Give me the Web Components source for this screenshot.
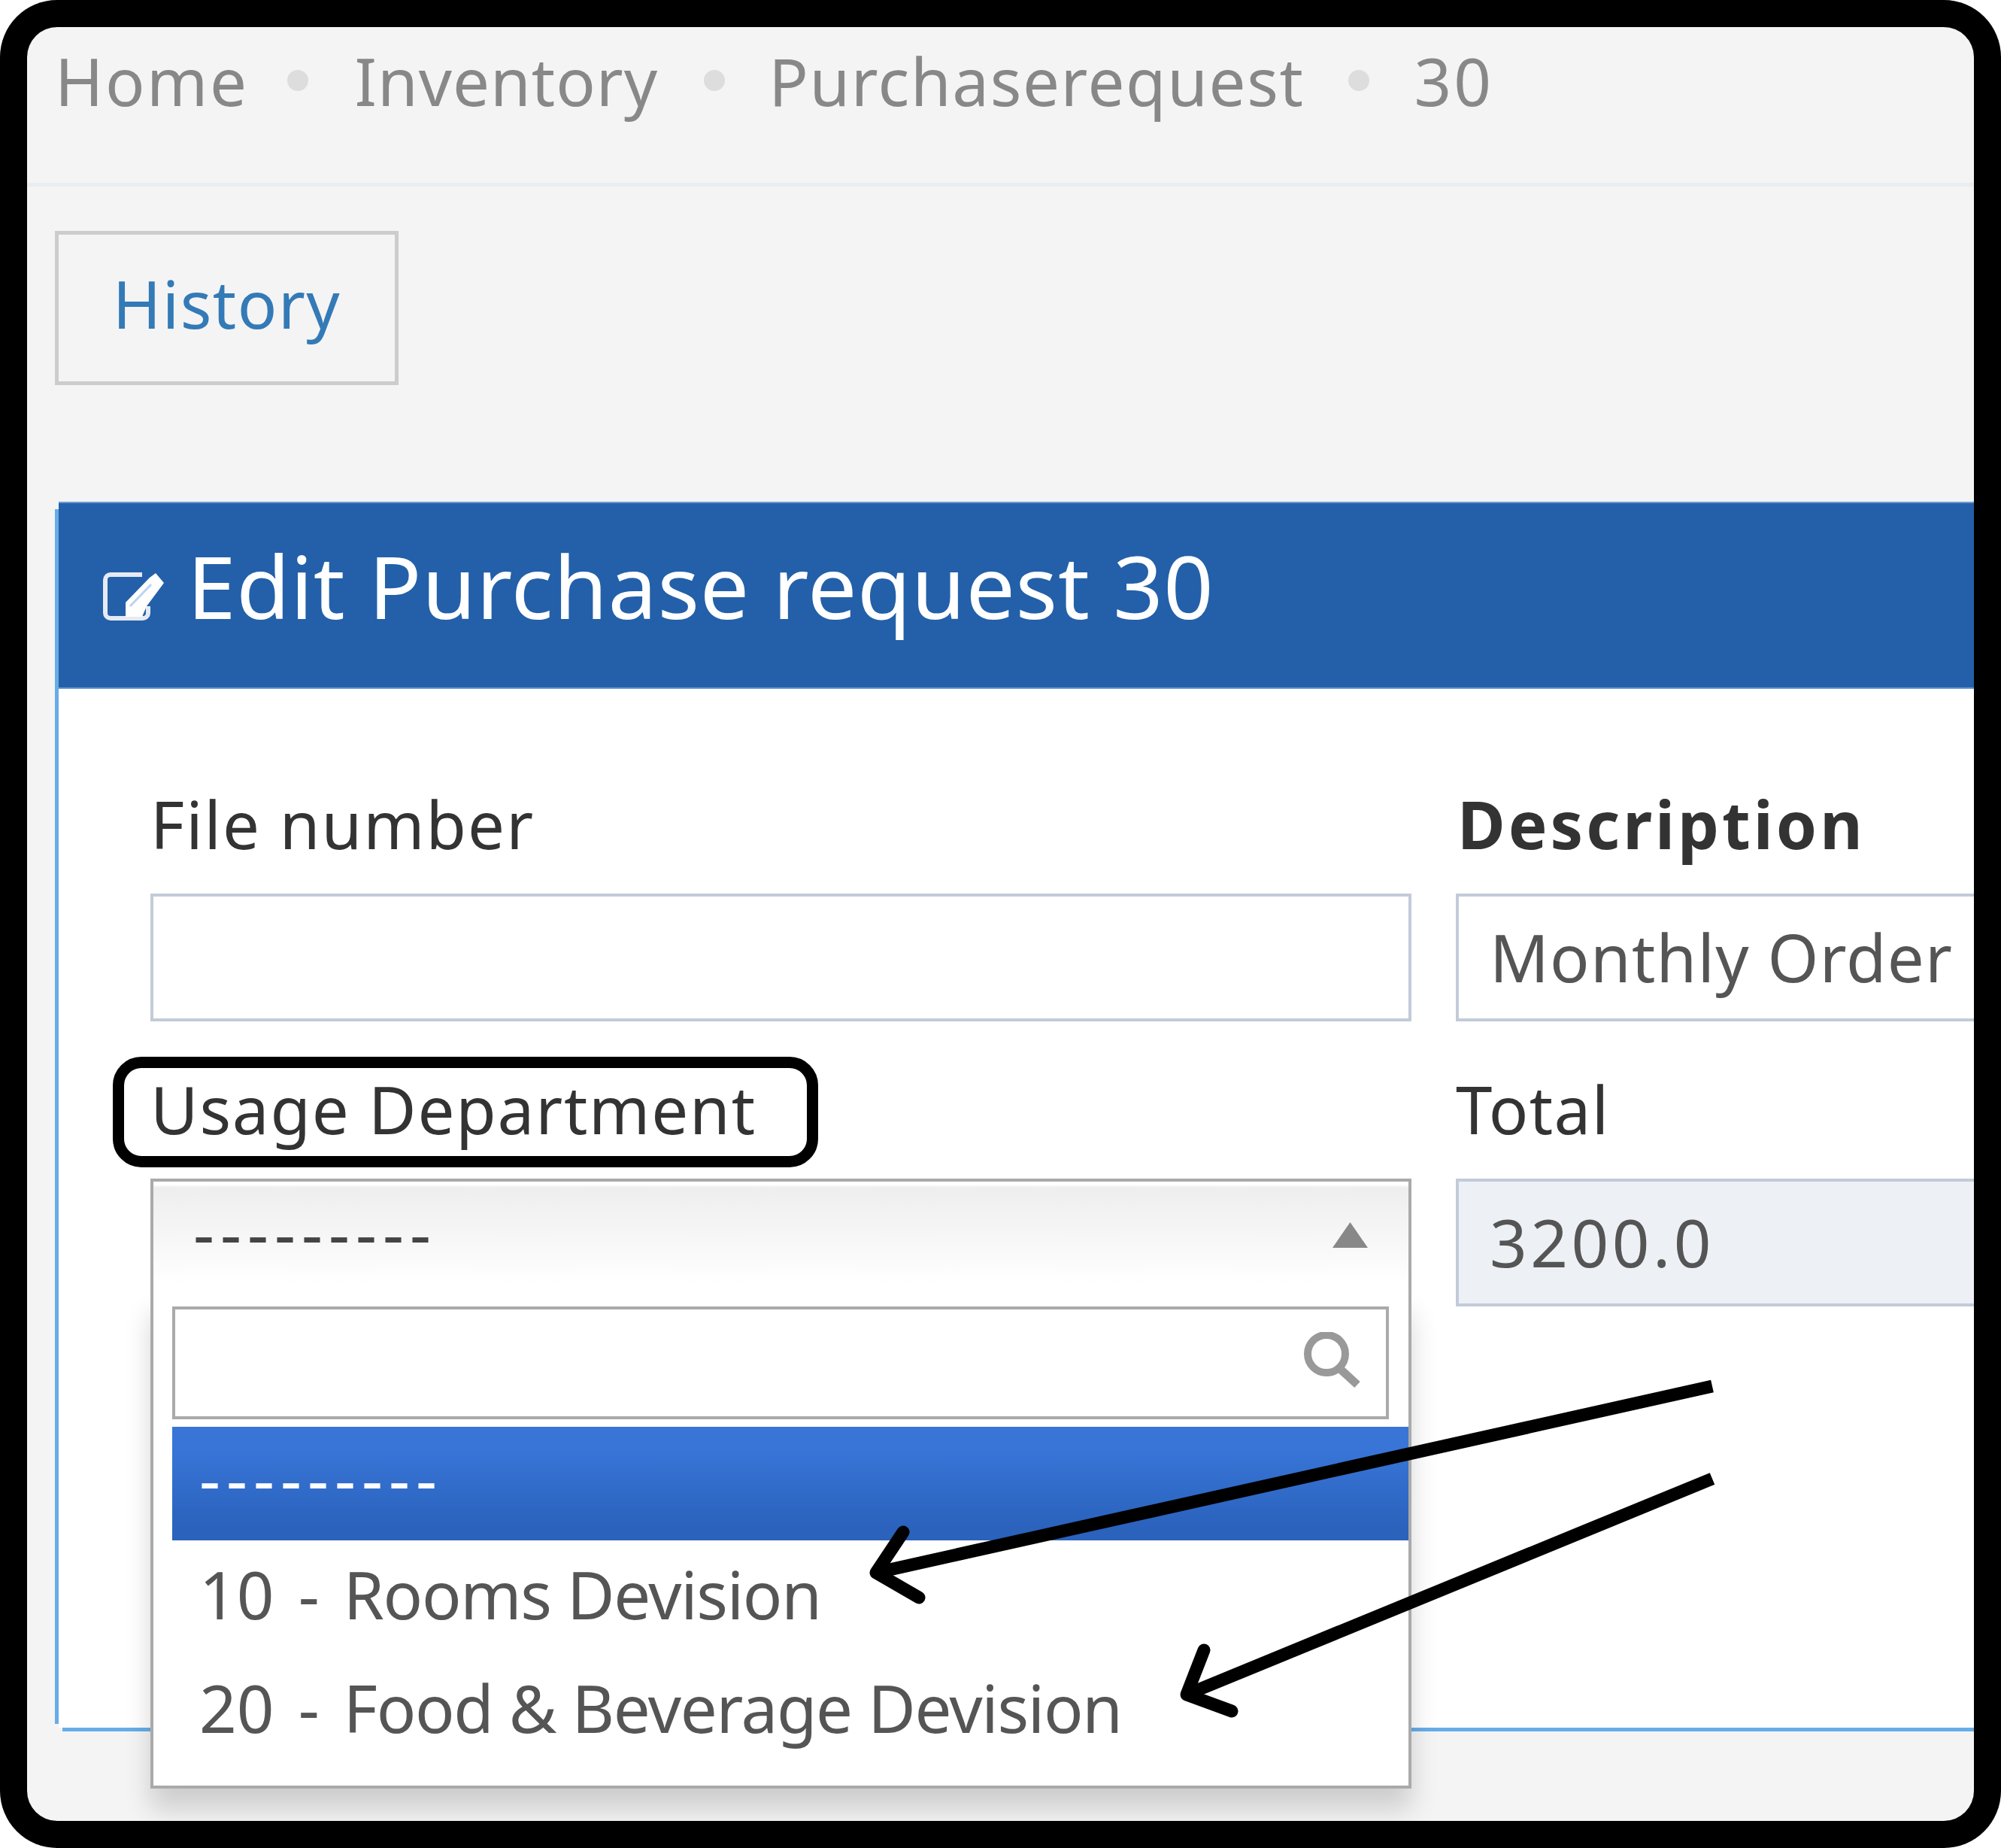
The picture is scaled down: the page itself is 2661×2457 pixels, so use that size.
<!DOCTYPE html>
<html>
<head>
<meta charset="utf-8">
<title>Edit Purchase request 30</title>
<style>
  html, body { margin: 0; padding: 0; background: #fff; }
  body { font-family: "Noto Sans", "Open Sans", sans-serif; }
</style>
</head>
<body>
<app-frame>
  <bread-crumbs>
    <crumb-item style="--track:2.5px;--ml:51px;--mr:62px">Home</crumb-item>
    <crumb-item style="--track:1px;--ml:61px;--mr:58px">Inventory</crumb-item>
    <crumb-item style="--track:1.6px;--ml:58px;--mr:60px">Purchaserequest</crumb-item>
    <crumb-item style="--track:3px" last>30</crumb-item>
  </bread-crumbs>
  <history-button>History</history-button>
  <edit-panel>
    <span slot="title">Edit Purchase request 30</span>
    <form-field style="--track:2px">File number<text-box slot="control"></text-box></form-field>
    <form-field style="--track:4px" bold>Description<text-box slot="control" style="--track:1.2px">Monthly Order</text-box></form-field>
    <form-field style="--track:1.8px" ringed>Usage Department<chosen-select slot="control"></chosen-select></form-field>
    <form-field style="--track:1.4px">Total<text-box slot="control" style="--track:4.5px" readonly>3200.0</text-box></form-field>
  </edit-panel>
  <note-arrows></note-arrows>
</app-frame>

<script>
// small helper, every component just sets its shadow html once
function mount(el, html) {
  el.attachShadow({ mode: 'open' }).innerHTML = html;
}

class AppFrame extends HTMLElement {
  constructor() {
    super();
    mount(this, `
      <style>
        :host { display: block; width: 2661px; height: 2457px; box-sizing: border-box; padding: 36px; background: #000; border-radius: 76px; position: relative; }
        .page { height: 100%; background: #f4f4f4; border-radius: 40px; overflow: hidden; }
      </style>
      <div class="page"><slot></slot></div>
    `);
  }
}

class BreadCrumbs extends HTMLElement {
  constructor() {
    super();
    mount(this, `
      <style>
        :host { display: flex; align-items: flex-start; height: 207px; box-sizing: content-box; padding-left: 37px; border-bottom: 5px solid #e9edf1; color: #888; font-size: 87px; line-height: 142px; }
      </style>
      <slot></slot>
    `);
  }
}

class CrumbItem extends HTMLElement {
  constructor() {
    super();
    mount(this, `
      <style>
        :host { display: flex; align-items: center; }
        span { letter-spacing: var(--track, 0); }
        i { width: 28px; height: 28px; margin: 0 var(--mr, 55px) 0 var(--ml, 54px); border-radius: 50%; background: #ddd; }
        :host([last]) i { display: none; }
      </style>
      <span><slot></slot></span><i></i>
    `);
  }
}

class HistoryButton extends HTMLElement {
  constructor() {
    super();
    mount(this, `
      <style>
        :host { display: flex; align-items: center; justify-content: center; box-sizing: border-box; width: 457px; height: 205px; padding-bottom: 14px; margin: 59px 0 0 37px; border: 5px solid #ccc; color: #337ab7; font-size: 87px; letter-spacing: 1.5px; }
      </style>
      <slot></slot>
    `);
  }
}

class EditPanel extends HTMLElement {
  constructor() {
    super();
    mount(this, `
      <style>
        :host {
          display: block; margin: 155px 0 0 37px; padding: 0 0 5px 5px;
          background:
            linear-gradient(#66ade8, #66ade8) 0 10px / 5px 1615px no-repeat,
            linear-gradient(#66ade8, #66ade8) 10px 100% / 100% 5px no-repeat;
        }
        header { display: flex; align-items: center; box-sizing: border-box; height: 249px; padding-left: 59px; background: #2360a9; border-top: 2px solid #6f9bd0; border-bottom: 2px solid #6f9bd0; color: #fff; font-size: 116px; letter-spacing: .7px; }
        header svg { flex: none; margin: 2px 30px 0 0; }
        header span { display: block; margin-top: -28px; }
        .body { box-sizing: border-box; height: 1381px; padding: 129px 0 0 122px; background: #fff; }
        .grid { display: grid; grid-template-columns: 1677px 1677px; column-gap: 59px; row-gap: 66px; align-items: start; }
      </style>
      <header>
        <svg width="82" height="66" viewBox="0 0 82 66">
          <path d="M52 4H10a7 7 0 0 0-7 7v44a7 7 0 0 0 7 7h43a7 7 0 0 0 7-7V46" fill="none" stroke="#e6eaf3" stroke-width="6"/>
          <path d="M30 41 62 8l8-6 11 13-23 31-6 14H30z" fill="#fff"/>
          <path d="M36 46 64 17" stroke="#bcd3f0" stroke-width="3"/>
        </svg>
        <span><slot name="title"></slot></span>
      </header>
      <div class="body"><div class="grid"><slot></slot></div></div>
    `);
  }
}

class FormField extends HTMLElement {
  constructor() {
    super();
    mount(this, `
      <style>
        :host { display: block; color: #333; font-size: 87px; }
        label { display: block; position: relative; height: 100px; line-height: 100px; margin-bottom: 43px; letter-spacing: var(--track, 0); }
        :host([bold]) label { font-weight: 700; padding-left: 2px; }
        .ring { display: none; position: absolute; left: -50px; top: -19px; box-sizing: border-box; width: 938px; height: 147px; border: 15px solid #000; border-radius: 38px; }
        :host([ringed]) .ring { display: block; }
      </style>
      <label><slot></slot><span class="ring"></span></label>
      <slot name="control"></slot>
    `);
  }
}

class TextBox extends HTMLElement {
  constructor() {
    super();
    mount(this, `
      <style>
        :host { display: flex; align-items: center; box-sizing: border-box; height: 170px; padding: 0 0 3px 41px; border: 4px solid #c2cbd9; background: #fff; color: #555; font-size: 87px; }
        :host([readonly]) { background: #edf0f5; }
        span { letter-spacing: var(--track, 0); }
      </style>
      <span><slot></slot></span>
    `);
  }
}

class ChosenSelect extends HTMLElement {
  constructor() {
    super();
    mount(this, `
      <style>
        :host { display: block; position: relative; height: 153px; font-size: 87px; color: #444; }
        .single { position: relative; z-index: 2; display: flex; align-items: center; justify-content: space-between; box-sizing: border-box; height: 153px; padding: 0 54px 0 53px; border: 4px solid #aaa; border-bottom: 0; background: linear-gradient(#fff 0, #fff 4px, #eee 8px, #fff 92%); }
        .single span { letter-spacing: 8px; margin-top: -16px; }
        .single svg { margin-top: -8px; }
        .drop { position: absolute; z-index: 1; left: 0; right: 0; top: 153px; box-sizing: border-box; height: 658px; padding: 17px 0 0 25px; border: 4px solid #aaa; border-top: 0; background: #fff; box-shadow: 0 27px 33px rgba(0, 0, 0, .16); }
        .search { display: flex; align-items: center; justify-content: flex-end; box-sizing: border-box; height: 150px; margin: 0 26px 10px 0; padding: 0 30px 7px 0; border: 4px solid #aaa; background: #fff; }
        .opt { display: flex; align-items: center; height: 151px; padding: 0 0 10px 36px; box-sizing: border-box; color: #555; white-space: pre; }
        .opt b { font-weight: 400; word-spacing: 9.5px; }
        .opt em { font-style: normal; letter-spacing: -1.3px; }
        .opt.on { background: linear-gradient(#3875d7 20%, #2a62bc 90%); color: #fff; letter-spacing: 8px; padding-bottom: 16px; }
      </style>
      <div class="single">
        <span>---------</span>
        <svg width="47" height="34" viewBox="0 0 47 34"><path d="M23.5 0 47 34H0z" fill="#888"/></svg>
      </div>
      <div class="drop">
        <div class="search">
          <svg width="80" height="76" viewBox="0 0 80 76">
            <circle cx="31" cy="29" r="25" fill="none" stroke="#999" stroke-width="10"/>
            <path d="M47 47 72 70" stroke="#999" stroke-width="11"/>
          </svg>
        </div>
        <div class="opt on">---------</div>
        <div class="opt"><b>10 - </b><em>Rooms Devision</em></div>
        <div class="opt"><b>20 - </b><em>Food &amp; Beverage Devision</em></div>
      </div>
    `);
  }
}

// the two hand drawn arrows lying over the screenshot
class NoteArrows extends HTMLElement {
  constructor() {
    super();
    mount(this, `
      <style>
        :host { position: absolute; left: 0; top: 0; z-index: 5; pointer-events: none; }
        svg { display: block; }
        path { fill: none; stroke: #000; stroke-width: 17; stroke-linejoin: round; }
        .head { stroke-linecap: round; }
      </style>
      <svg width="2661" height="2457" viewBox="0 0 2661 2457">
        <path d="M2277 1843 1165 2091"/>
        <path class="head" d="M1201 2037 1165 2091 1222 2124"/>
        <path d="M2277 1966 1578 2253"/>
        <path class="head" d="M1601 2194 1578 2253 1638 2275"/>
      </svg>
    `);
  }
}

customElements.define('app-frame', AppFrame);
customElements.define('bread-crumbs', BreadCrumbs);
customElements.define('crumb-item', CrumbItem);
customElements.define('history-button', HistoryButton);
customElements.define('edit-panel', EditPanel);
customElements.define('form-field', FormField);
customElements.define('text-box', TextBox);
customElements.define('chosen-select', ChosenSelect);
customElements.define('note-arrows', NoteArrows);
</script>
</body>
</html>
